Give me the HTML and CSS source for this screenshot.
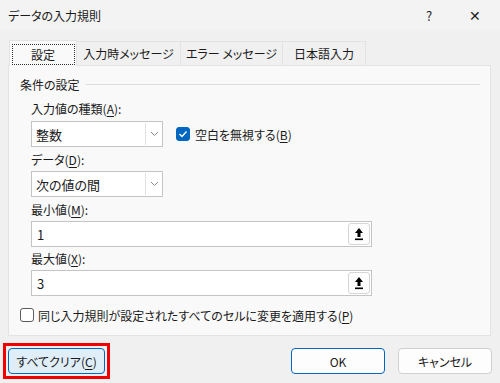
FILE: index.html
```html
<!DOCTYPE html>
<html lang="ja">
<head>
  <meta charset="UTF-8" />
  <title>データの入力規則</title>
  <link rel="stylesheet" href="styles.css">
</head>
<body>
  <div class="dialog">
    <div class="titlebar">
      <span class="title">データの入力規則</span>
      <span class="tb-btn">?</span>
      <span class="tb-btn close">&#x2715;</span>
    </div>

    <div class="tabs">
      <div class="tab active"><span class="focus">設定</span></div>
      <div class="tab">入力時メッセージ</div>
      <div class="tab">エラー メッセージ</div>
      <div class="tab">日本語入力</div>
    </div>

    <div class="panel">
      <div class="group-head">
        <span>条件の設定</span>
        <div class="rule"></div>
      </div>

      <div class="fields">
        <div class="label first"><span>入力値の種類(<u>A</u>):</span></div>
        <div class="row">
          <div class="combo">
            <span class="combo-text">整数</span>
            <span class="combo-arrow">
              <svg width="9" height="6" viewBox="0 0 9 6"><path d="M1 1 L4.5 4.5 L8 1" fill="none" stroke="#8a8a8a" stroke-width="1"/></svg>
            </span>
          </div>
          <label class="check">
            <span class="box checked">
              <svg width="10" height="8" viewBox="0 0 10 8"><path d="M1.5 4 L4 6.5 L8.5 1.5" fill="none" stroke="#fff" stroke-width="1.4"/></svg>
            </span>
            <span>空白を無視する(<u>B</u>)</span>
          </label>
        </div>

        <div class="label"><span>データ(<u>D</u>):</span></div>
        <div class="combo">
          <span class="combo-text">次の値の間</span>
          <span class="combo-arrow">
            <svg width="9" height="6" viewBox="0 0 9 6"><path d="M1 1 L4.5 4.5 L8 1" fill="none" stroke="#8a8a8a" stroke-width="1"/></svg>
          </span>
        </div>

        <div class="label"><span>最小値(<u>M</u>):</span></div>
        <div class="textbox">
          <span class="value">1</span>
          <span class="ref-btn">
            <svg width="10" height="14" viewBox="0 0 10 14"><path d="M5 1 L1 6 H3.5 V10 H6.5 V6 H9 Z" fill="#000"/><rect x="1" y="11.5" width="8" height="1.6" fill="#000"/></svg>
          </span>
        </div>

        <div class="label short"><span>最大値(<u>X</u>):</span></div>
        <div class="textbox">
          <span class="value">3</span>
          <span class="ref-btn">
            <svg width="10" height="14" viewBox="0 0 10 14"><path d="M5 1 L1 6 H3.5 V10 H6.5 V6 H9 Z" fill="#000"/><rect x="1" y="11.5" width="8" height="1.6" fill="#000"/></svg>
          </span>
        </div>
      </div>

      <label class="check apply">
        <span class="box"></span>
        <span>同じ入力規則が設定されたすべてのセルに変更を適用する(<u>P</u>)</span>
      </label>
    </div>

    <div class="footer">
      <span class="highlight">
        <button class="btn clear">すべてクリア(<u>C</u>)</button>
      </span>
      <div class="spacer"></div>
      <button class="btn default">OK</button>
      <button class="btn">キャンセル</button>
    </div>
  </div>
</body>
</html>
```

FILE: styles.css
```css
* {
  box-sizing: border-box;
}
body {
  margin: 0;
  width: 500px;
  height: 383px;
  background: #f0f0f0;
  font-family: "Noto Sans CJK JP", "Noto Sans", sans-serif;
  font-size: 12px;
  font-feature-settings: "palt";
  color: #1a1a1a;
  overflow: hidden;
}
u {
  text-decoration-thickness: 1px;
  text-underline-offset: 2px;
}
.dialog {
  display: flex;
  flex-direction: column;
  height: 383px;
}
.titlebar {
  height: 30px;
  display: flex;
  align-items: center;
  padding-left: 8px;
  background: #f3f3f3;
}
.title {
  flex: 1;
  font-size: 12px;
}
.tb-btn {
  width: 46px;
  text-align: center;
  font-size: 13px;
  color: #222;
}
.tb-btn.close {
  margin-right: 2px;
  font-size: 14px;
}
.tabs {
  display: flex;
  margin: 10px 0 0 9px;
  height: 25px;
  position: relative;
  z-index: 1;
}
.tab {
  height: 24px;
  margin-top: 1px;
  padding: 0 10px;
  display: flex;
  align-items: center;
  justify-content: center;
  border: 1px solid #e3e3e3;
  border-bottom: none;
  border-left: none;
  background: #f0f0f0;
  white-space: nowrap;
}
.tab:nth-child(2) { width: 104px; }
.tab:nth-child(3) { width: 102px; }
.tab:nth-child(4) { width: 83px; }
.tab.active {
  width: 68px;
  height: 26px;
  margin-top: 0;
  border-left: 1px solid #e3e3e3;
  background: #f9f9f9;
  padding: 0 1px;
}
.focus {
  display: flex;
  align-items: center;
  justify-content: center;
  width: 63px;
  height: 21px;
  border: 1px dotted #333;
  margin-top: 1px;
}
.panel {
  margin: 0 9px 0 8px;
  height: 271px;
  background: #f9f9f9;
  border: 1px solid #e3e3e3;
  padding: 9px 10px 0 11px;
}
.group-head {
  display: flex;
  align-items: center;
  height: 18px;
  gap: 6px;
}
.rule {
  flex: 1;
  height: 1px;
  background: #dcdcdc;
}
.fields {
  padding-left: 11px;
}
.label {
  height: 24px;
  display: flex;
  align-items: center;
}
.label.first {
  height: 28px;
  padding-top: 3px;
}
.label.short {
  height: 23px;
}
.row {
  display: flex;
  align-items: center;
  gap: 13px;
}
.combo {
  width: 132px;
  height: 26px;
  display: flex;
  background: #fff;
  border: 1px solid #c4c4c4;
}
.combo-text {
  flex: 1;
  display: flex;
  align-items: center;
  padding-left: 4px;
  font-size: 13px;
}
.combo-arrow {
  width: 17px;
  display: flex;
  align-items: center;
  justify-content: center;
  border-left: 1px solid #e0e0e0;
  margin: 1px 0;
}
.check {
  display: flex;
  align-items: center;
  gap: 5px;
}
.box {
  width: 14px;
  height: 14px;
  border: 1px solid #5c5c5c;
  border-radius: 3px;
  background: #fff;
  display: flex;
  align-items: center;
  justify-content: center;
}
.box.checked {
  border-color: #0067c0;
  background: #0067c0;
}
.textbox {
  width: 341px;
  height: 26px;
  display: flex;
  align-items: center;
  background: #fff;
  border: 1px solid #c4c4c4;
  padding: 0 1px 0 5px;
}
.value {
  flex: 1;
  font-size: 13px;
}
.ref-btn {
  width: 22px;
  height: 22px;
  display: flex;
  align-items: center;
  justify-content: center;
  border: 1px solid #d6d6d6;
  border-radius: 3px;
  background: #fdfdfd;
}
.check.apply {
  margin-top: 11px;
  height: 16px;
  gap: 4px;
}
.footer {
  display: flex;
  align-items: center;
  gap: 13px;
  padding: 7px 8px 0 3px;
}
.spacer {
  flex: 1;
}
.highlight {
  display: flex;
  border: 3px solid #f00000;
  padding: 2px;
}
.btn {
  height: 26px;
  width: 94px;
  font: inherit;
  color: #1a1a1a;
  background: #fdfdfd;
  border: 1px solid #d0d0d0;
  border-radius: 4px;
  padding: 0;
}
.btn.default {
  border-color: #0067c0;
}
.btn.clear {
  width: 97px;
  background: #e0eef9;
  border-color: #0067c0;
}
```
